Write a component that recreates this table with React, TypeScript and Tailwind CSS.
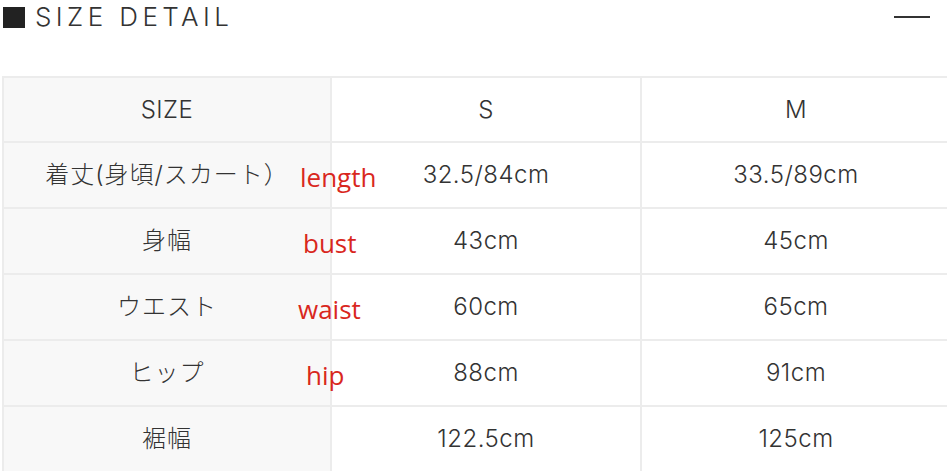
import React from "react";

const rows = [
  { label: "着丈(身頃/スカート）", note: "length", noteX: 296, s: "32.5/84cm", m: "33.5/89cm" },
  { label: "身幅", note: "bust", noteX: 299, s: "43cm", m: "45cm" },
  { label: "ウエスト", note: "waist", noteX: 294, s: "60cm", m: "65cm" },
  { label: "ヒップ", note: "hip", noteX: 302, s: "88cm", m: "91cm" },
  { label: "裾幅", note: "", noteX: 0, s: "122.5cm", m: "125cm" },
];

const font = { fontFamily: 'Inter, "Noto Sans CJK JP", sans-serif' };

export default function App() {
  return (
    <div className="relative h-[471px] w-[947px] overflow-hidden bg-white text-[#333]" style={font}>
      <div className="flex h-[34px] items-center justify-between pl-[3px] pr-[17px]">
        <div className="flex items-center gap-[10px]">
          <span className="block h-[21px] w-[22px] bg-[#222]" />
          <span className="text-[26px] font-light leading-none tracking-[0.17em] text-[#333]">
            SIZE DETAIL
          </span>
        </div>
        <span className="block h-[2px] w-[36px] bg-[#333]" />
      </div>

      <table className="mt-[42px] ml-[2px] w-[950px] table-fixed border-collapse text-[24px] font-light tracking-[0.02em]">
        <colgroup>
          <col className="w-[328px]" />
          <col className="w-[310px]" />
          <col />
        </colgroup>
        <tbody>
          <tr className="h-[65px]">
            <td className="border-2 border-[#ececec] bg-[#f8f8f8] text-center">SIZE</td>
            <td className="border-2 border-[#ececec] text-center">S</td>
            <td className="border-2 border-[#ececec] text-center">M</td>
          </tr>
          {rows.map((r) => (
            <tr key={r.label} className="h-[66px]">
              <td className="relative border-2 border-[#ececec] bg-[#f8f8f8] text-center tracking-[0.04em]">
                {r.label}
                {r.note && (
                  <span
                    className="absolute top-1/2 z-10 mt-[2px] -translate-y-1/2 text-[26px] font-normal leading-none tracking-normal text-[#d9271d]"
                    style={{ left: r.noteX, fontFamily: '"Open Sans", "Noto Sans", sans-serif' }}
                  >
                    {r.note}
                  </span>
                )}
              </td>
              <td className="border-2 border-[#ececec] text-center">{r.s}</td>
              <td className="border-2 border-[#ececec] text-center">{r.m}</td>
            </tr>
          ))}
        </tbody>
      </table>
    </div>
  );
}
